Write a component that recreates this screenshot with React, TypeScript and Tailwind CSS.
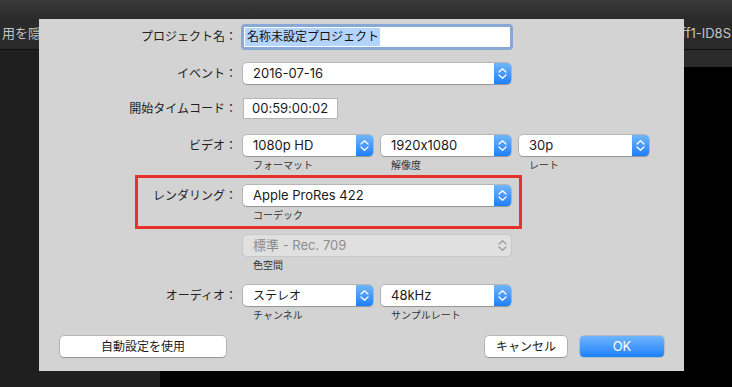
import React from "react";

const sans = "font-['Inter','Noto_Sans_CJK_JP',sans-serif] [font-feature-settings:'calt'_0]";

function Stepper({ disabled }: { disabled?: boolean }) {
  return (
    <div
      className={
        disabled
          ? "w-[17px] h-full flex items-center justify-center"
          : "w-[17px] h-full rounded-r-[4px] bg-gradient-to-b from-[#6fb5fb] to-[#1a7ef9] flex items-center justify-center"
      }
    >
      <svg width="9" height="13" viewBox="0 0 9 13" fill="none" stroke={disabled ? "#9c9c9c" : "#ffffff"} strokeWidth="1.3" strokeLinecap="round" strokeLinejoin="round">
        <path d="M1 5 L4.5 1.8 L8 5" />
        <path d="M1 8 L4.5 11.2 L8 8" />
      </svg>
    </div>
  );
}

function Popup({ value, wide, jp, disabled }: { value: string; wide?: boolean; jp?: boolean; disabled?: boolean }) {
  return (
    <div
      className={`h-[21px] ${wide ? "w-[268px]" : "w-[130px]"} flex items-stretch rounded-[4px] ${
        disabled
          ? "bg-[#e0e0e0] shadow-[0_0_0_1px_#c8c8c8]"
          : "bg-white shadow-[0_0_0_0.5px_rgba(0,0,0,0.28),0_1px_1px_rgba(0,0,0,0.18)]"
      }`}
    >
      <span
        className={`flex-1 pl-[10px] flex items-center ${jp ? "text-[12px]" : "text-[13px]"} ${
          disabled ? "text-[#8c8c8c]" : "text-[#1a1a1a]"
        }`}
      >
        {value}
      </span>
      <Stepper disabled={disabled} />
    </div>
  );
}

function Row({ label, h, children }: { label?: string; h: string; children?: React.ReactNode }) {
  return (
    <div className={`grid grid-cols-[198px_1fr] gap-x-[6px] items-center ${h}`}>
      <div className="text-right text-[12px] text-[#222]">{label}</div>
      <div className="flex items-center gap-[8px]">{children}</div>
    </div>
  );
}

function Sub({ items }: { items: string[] }) {
  return (
    <div className="grid grid-cols-[198px_1fr] gap-x-[6px] h-[19px] items-center">
      <div />
      <div className="flex gap-[8px]">
        {items.map((t) => (
          <span key={t} className="w-[130px] pl-[10px] text-[10px] text-[#333]">
            {t}
          </span>
        ))}
      </div>
    </div>
  );
}

export default function App() {
  return (
    <div className={`relative w-[732px] h-[387px] overflow-hidden bg-black flex flex-col ${sans}`}>
      {/* app behind the sheet */}
      <div className="h-[19px] bg-gradient-to-b from-[#3a3a3a] to-[#2b2b2b]" />
      <div className="h-[31px] bg-[#2a2a2a] border-b border-[#111] flex items-center justify-between text-[13px] text-[#c4c4c4]">
        <span className="ml-[2px]">用を隠す</span>
        <span className="mr-[1px]">ff1-ID8S</span>
      </div>
      <div className="flex-1 flex">
        <div className="w-[160px] bg-[#1f1f1f]" />
        <div className="flex-1 flex flex-col">
          <div className="h-[17px] bg-[#2b2b2b]" />
          <div className="flex-1 bg-black" />
        </div>
      </div>

      {/* sheet */}
      <div className="absolute left-[39px] top-[19px] w-[645px] h-[352px] bg-[#d3d3d3] flex flex-col pt-[5px]">
        <Row label="プロジェクト名：" h="h-[26px]">
          <div className="ml-[-2px] w-[272px] h-[26px] rounded-[4px] border-[3px] border-[#88a8d6] bg-white flex items-center">
            <span className="ml-[1px] pl-[2px] pr-[1px] bg-[#b3d4fd] text-[12px] text-[#111] leading-[18px]">名称未設定プロジェクト</span>
          </div>
        </Row>

        <div className="mt-[13px]">
          <Row label="イベント：" h="h-[21px]">
            <Popup value="2016-07-16" wide />
          </Row>
        </div>

        <div className="mt-[14px]">
          <Row label="開始タイムコード：" h="h-[21px]">
            <div className="w-[95px] h-[21px] bg-white border border-[#b5b5b5] pl-[8px] flex items-center text-[13px] text-[#1a1a1a]">
              00:59:00:02
            </div>
          </Row>
        </div>

        <div className="mt-[16px]">
          <Row label="ビデオ：" h="h-[21px]">
            <Popup value="1080p HD" />
            <Popup value="1920x1080" />
            <Popup value="30p" />
          </Row>
          <Sub items={["フォーマット", "解像度", "レート"]} />
        </div>

        <div className="relative pt-[10px]">
          <Row label="レンダリング：" h="h-[21px]">
            <Popup value="Apple ProRes 422" wide />
          </Row>
          <Sub items={["コーデック"]} />
          <div className="absolute top-0 left-[96px] w-[387px] h-[54px] border-[3px] border-[#e6322a]" />
        </div>

        <div className="mt-[10px]">
          <Row h="h-[21px]">
            <Popup value="標準 - Rec. 709" wide disabled />
          </Row>
          <Sub items={["色空間"]} />
        </div>

        <div className="mt-[10px]">
          <Row label="オーディオ：" h="h-[21px]">
            <Popup value="ステレオ" jp />
            <Popup value="48kHz" />
          </Row>
          <Sub items={["チャンネル", "サンプルレート"]} />
        </div>

        <div className="mt-[11px] flex items-center pl-[21px] pr-[20px]">
          <button className="w-[166px] h-[21px] rounded-[4px] bg-white shadow-[0_0_0_0.5px_rgba(0,0,0,0.28),0_1px_1px_rgba(0,0,0,0.18)] text-[12px] text-[#1a1a1a]">
            自動設定を使用
          </button>
          <button className="ml-auto w-[82px] h-[21px] rounded-[4px] bg-white shadow-[0_0_0_0.5px_rgba(0,0,0,0.28),0_1px_1px_rgba(0,0,0,0.18)] text-[12px] text-[#1a1a1a]">
            キャンセル
          </button>
          <button className="ml-[13px] w-[84px] h-[21px] rounded-[4px] bg-gradient-to-b from-[#6db4fb] to-[#1b80fa] shadow-[0_0_0_0.5px_rgba(0,60,160,0.3)] text-[13px] text-white">
            OK
          </button>
        </div>
      </div>
    </div>
  );
}
